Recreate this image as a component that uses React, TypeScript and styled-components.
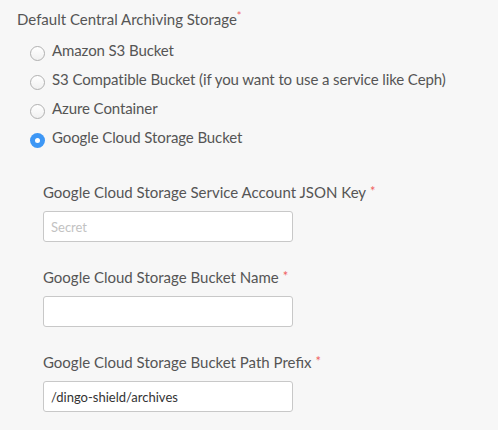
import React from "react";
import styled, { createGlobalStyle } from "styled-components";

const Global = createGlobalStyle`
  html, body { margin: 0; padding: 0; background: #f7f7f7; }
  body { font-family: Lato, "Noto Sans", sans-serif; color: #555; }
`;

const Page = styled.div`
  padding: 5px 0 0 17px;
  width: 481px;
  height: 425px;
  box-sizing: border-box;
`;

const Title = styled.div`
  font-size: 15px;
  line-height: 22px;
  color: #555;
`;

const SupStar = styled.span`
  color: #f0625f;
  font-size: 11px;
  vertical-align: 5px;
`;

const Star = styled.span`
  color: #f0625f;
  font-size: 13px;
  margin-left: 4px;
  vertical-align: 2px;
`;

const RadioList = styled.div`
  display: flex;
  flex-direction: column;
  gap: 7px;
  margin-top: 9px;
  padding-left: 13px;
`;

const RadioRow = styled.label`
  display: flex;
  align-items: flex-start;
  gap: 7px;
  font-size: 15px;
  line-height: 22px;
  letter-spacing: -0.1px;
  color: #555;
`;

const Circle = styled.span<{ $on?: boolean }>`
  width: 15px;
  height: 15px;
  border-radius: 50%;
  box-sizing: border-box;
  margin-top: 7px;
  flex: none;
  position: relative;
  border: ${(p) => (p.$on ? "none" : "1px solid #b0b0b0")};
  background: ${(p) => (p.$on ? "#3d97f5" : "linear-gradient(#fff, #f0f0f0)")};
  &::after {
    content: "";
    display: ${(p) => (p.$on ? "block" : "none")};
    position: absolute;
    left: 5px;
    top: 5px;
    width: 5px;
    height: 5px;
    border-radius: 50%;
    background: #fff;
  }
`;

const Fields = styled.div`
  display: flex;
  flex-direction: column;
  gap: 23px;
  margin-top: 32px;
  padding-left: 26px;
`;

const Field = styled.div`
  display: flex;
  flex-direction: column;
  gap: 8px;
`;

const Label = styled.div`
  font-size: 15px;
  line-height: 22px;
  color: #555;
`;

const Input = styled.input`
  width: 250px;
  height: 31px;
  box-sizing: border-box;
  border: 1px solid #c8c8c8;
  border-radius: 3px;
  background: #fff;
  padding: 0 7px;
  font-family: Lato, "Noto Sans", sans-serif;
  font-size: 13px;
  color: #333;
  outline: none;
  &::placeholder { color: #c2c2c2; }
`;

const options = [
  { label: "Amazon S3 Bucket", on: false },
  { label: "S3 Compatible Bucket (if you want to use a service like Ceph)", on: false },
  { label: "Azure Container", on: false },
  { label: "Google Cloud Storage Bucket", on: true },
];

const fields = [
  { label: "Google Cloud Storage Service Account JSON Key", placeholder: "Secret", value: "" },
  { label: "Google Cloud Storage Bucket Name", placeholder: "", value: "" },
  { label: "Google Cloud Storage Bucket Path Prefix", placeholder: "", value: "/dingo-shield/archives" },
];

export default function App() {
  return (
    <>
      <Global />
      <Page>
        <Title>
          Default Central Archiving Storage<SupStar>*</SupStar>
        </Title>
        <RadioList>
          {options.map((o) => (
            <RadioRow key={o.label}>
              <Circle $on={o.on} />
              {o.label}
            </RadioRow>
          ))}
        </RadioList>
        <Fields>
          {fields.map((f) => (
            <Field key={f.label}>
              <Label>
                {f.label}
                <Star>*</Star>
              </Label>
              <Input placeholder={f.placeholder} defaultValue={f.value} />
            </Field>
          ))}
        </Fields>
      </Page>
    </>
  );
}
